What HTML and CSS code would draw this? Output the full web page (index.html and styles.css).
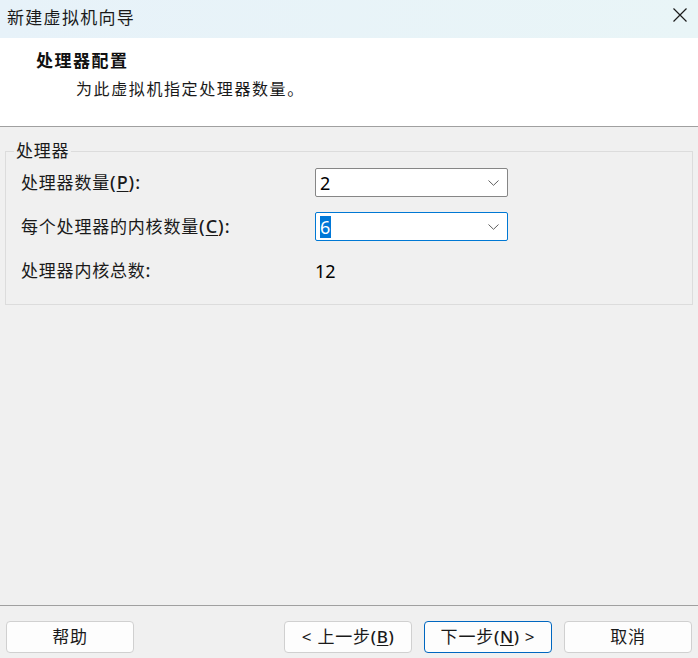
FILE: index.html
```html
<!DOCTYPE html>
<html lang="zh-CN">
<head>
<meta charset="utf-8">
<title>新建虚拟机向导</title>
<link rel="stylesheet" href="styles.css">
</head>
<body>
<div class="window">
  <div class="titlebar">
    <span class="title">新建虚拟机向导</span>
    <svg class="close" width="16" height="16" viewBox="0 0 16 16"><path d="M1.5 1.5 L14.5 14.5 M14.5 1.5 L1.5 14.5" stroke="#1b1b1b" stroke-width="1.2" fill="none"/></svg>
  </div>
  <div class="header">
    <div class="h-title">处理器配置</div>
    <div class="h-sub">为此虚拟机指定处理器数量。</div>
  </div>
  <div class="main">
    <fieldset class="group">
      <legend>处理器</legend>
      <div class="grid">
        <div class="label">处理器数量<span class="lat">(<u>P</u>):</span></div>
        <div class="combo">
          <span class="val">2</span>
          <svg class="chev" width="11" height="6" viewBox="0 0 11 6"><path d="M0.5 0.5 L5.5 5.3 L10.5 0.5" stroke="#5f5f5f" stroke-width="1" fill="none"/></svg>
        </div>
        <div class="label">每个处理器的内核数量<span class="lat">(<u>C</u>):</span></div>
        <div class="combo focus">
          <span class="val sel">6</span>
          <svg class="chev" width="11" height="6" viewBox="0 0 11 6"><path d="M0.5 0.5 L5.5 5.3 L10.5 0.5" stroke="#5f5f5f" stroke-width="1" fill="none"/></svg>
        </div>
        <div class="label">处理器内核总数<span class="lat">:</span></div>
        <div class="total">12</div>
      </div>
    </fieldset>
  </div>
  <div class="footer">
    <button class="btn">帮助</button>
    <div class="nav">
      <button class="btn">&lt; 上一步<span class="lat">(<u>B</u>)</span></button>
      <button class="btn primary">下一步<span class="lat">(<u>N</u>)</span> &gt;</button>
      <button class="btn">取消</button>
    </div>
  </div>
</div>
</body>
</html>
```

FILE: styles.css
```css
* { box-sizing: border-box; }
html, body { margin: 0; padding: 0; }
body {
  width: 698px;
  height: 658px;
  overflow: hidden;
  font-family: "Noto Sans", "Noto Sans CJK SC", sans-serif;
  font-size: 17px;
  color: #1a1a1a;
  background: #f0f0f0;
}
.window {
  display: flex;
  flex-direction: column;
  height: 658px;
}
.titlebar {
  height: 38px;
  flex: none;
  display: flex;
  align-items: center;
  justify-content: space-between;
  padding: 0 10px 0 7px;
  background: linear-gradient(90deg, #e7f2f9 0%, #e9f5f7 100%);
}
.title {
  font-size: 17px;
  letter-spacing: 1.3px;
  color: #1a1a1a;
  line-height: 24px;
  margin-top: -3px;
}
.close { margin-top: -8px; }
.header {
  flex: none;
  height: 89px;
  background: #ffffff;
  border-bottom: 1px solid #a0a0a0;
  padding-top: 11px;
}
.h-title {
  margin-left: 36px;
  font-weight: bold;
  font-size: 17px;
  letter-spacing: 1.5px;
  line-height: 24px;
  color: #111;
}
.h-sub {
  margin-left: 76px;
  margin-top: 4px;
  font-size: 16px;
  letter-spacing: 1.6px;
  line-height: 24px;
  color: #1a1a1a;
}
.main {
  flex: 1;
  padding-top: 14px;
}
.group {
  margin: 0 5px;
  border: 1px solid #dcdcdc;
  padding: 0 8px 19px;
  min-width: 0;
}
.group legend {
  padding: 0 2px;
  line-height: 20px;
  letter-spacing: 0.8px;
}
.grid {
  display: grid;
  grid-template-columns: 294px 193px;
  grid-auto-rows: 29px;
  row-gap: 15px;
  margin: 7px 0 0 7px;
  align-items: center;
}
.label {
  letter-spacing: 0.8px;
  line-height: 24px;
}
.lat {
  font-weight: 500;
  font-size: 18px;
  letter-spacing: 1px;
}
.combo {
  height: 29px;
  background: #ffffff;
  border: 1px solid #868686;
  border-radius: 2px;
  display: flex;
  align-items: center;
  justify-content: space-between;
  padding: 0 8px 0 4px;
}
.combo.focus { border-color: #0078d4; }
.val {
  font-size: 18px;
  line-height: 22px;
  color: #000;
}
.val.sel {
  background: #0078d7;
  color: #ffffff;
  padding: 0 1px 0 0;
}
.total {
  font-size: 18px;
  color: #000;
}
.footer {
  flex: none;
  height: 53px;
  border-top: 1px solid #a0a0a0;
  display: flex;
  justify-content: space-between;
  align-items: flex-start;
  padding: 15px 6px 0 6px;
}
.nav {
  display: flex;
  gap: 12px;
}
.btn {
  width: 128px;
  height: 32px;
  border: 1px solid #d0d0d0;
  border-radius: 4px;
  background: #fdfdfd;
  font-family: "Noto Sans", "Noto Sans CJK SC", sans-serif;
  font-size: 17px;
  letter-spacing: 0.8px;
  color: #1a1a1a;
  padding: 0;
  line-height: 24px;
}
.btn .lat { font-size: 17px; letter-spacing: 0.6px; }
.btn.primary { border-color: #0067c0; }
u { text-underline-offset: 2px; }
```
